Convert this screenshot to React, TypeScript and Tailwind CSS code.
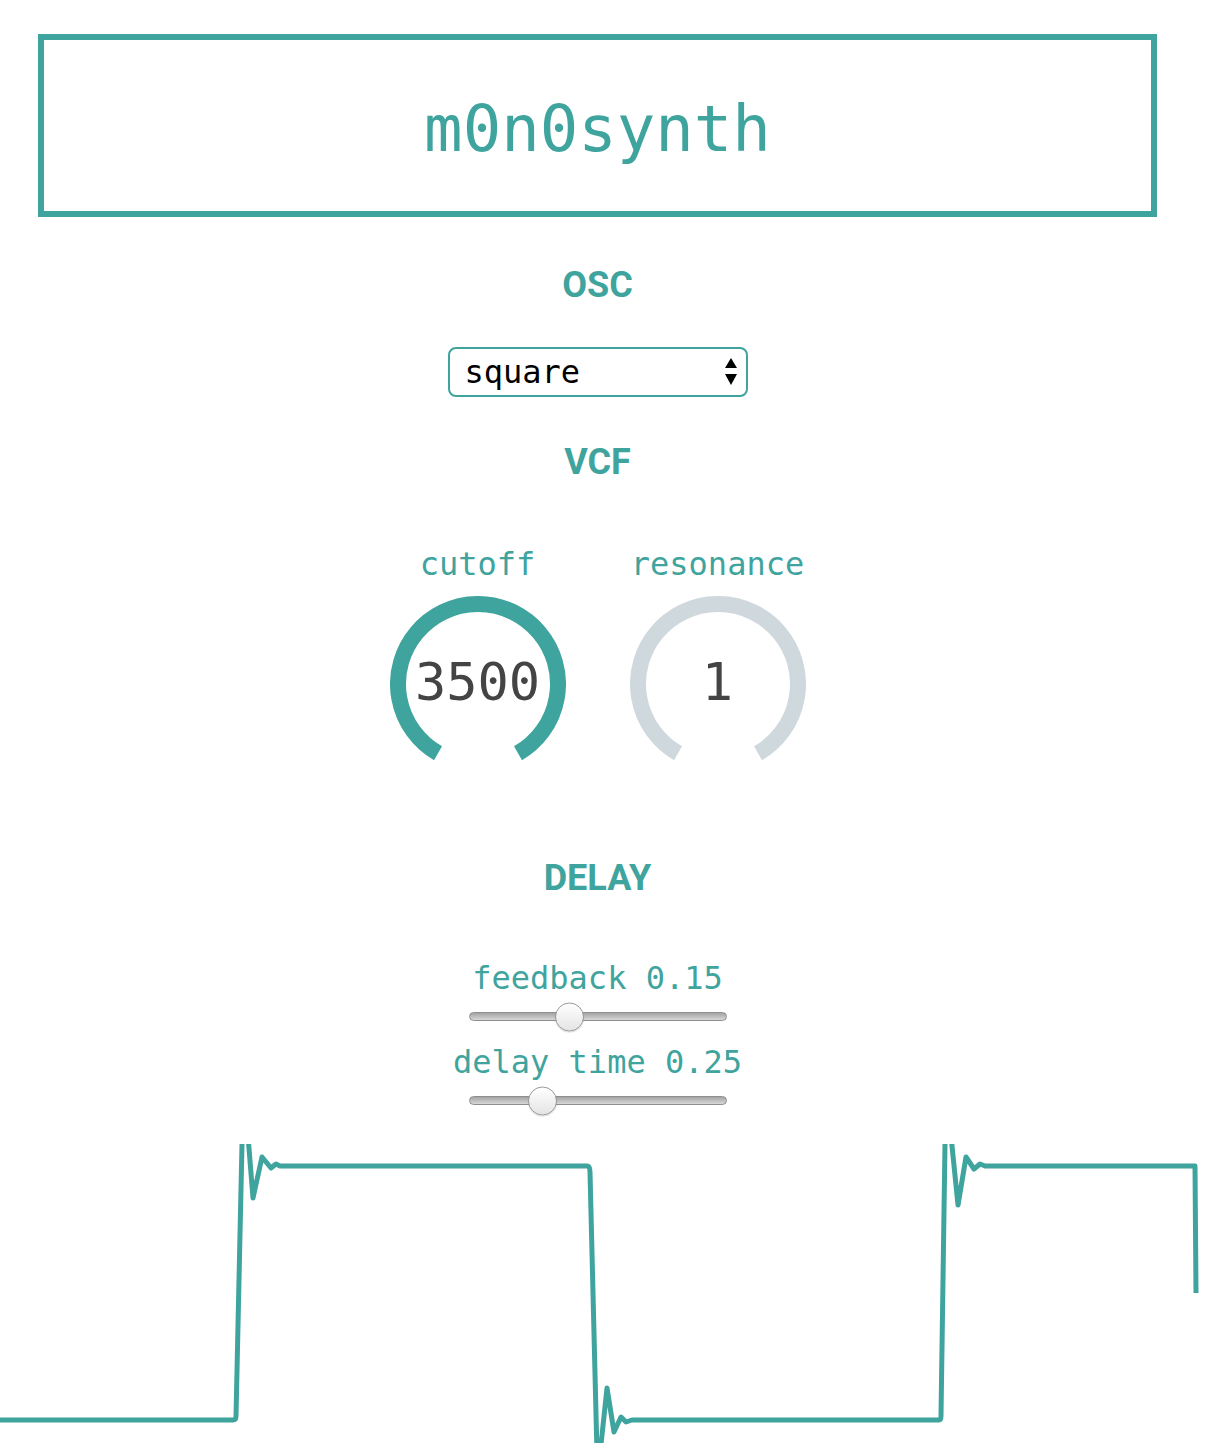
const teal = '#3fa49e';

function Knob({ label, value, color }: { label: string; value: string; color: string }) {
  return (
    <div className="w-[240px] flex flex-col items-center">
      <div className="h-[40px] text-[32px] leading-[40px] text-[#3fa49e]">{label}</div>
      <div className="relative w-[176px] h-[176px] mt-[12px]">
        <svg width="176" height="176" viewBox="0 0 176 176">
          <path d="M48 157.28 A80 80 0 1 1 128 157.28" fill="none" stroke={color} strokeWidth="16" />
        </svg>
        <div className="absolute inset-0 flex items-center justify-center pb-[4px]">
          <span className="text-[52px] leading-none text-[#444]">{value}</span>
        </div>
      </div>
    </div>
  );
}

function Slider({ pos }: { pos: number }) {
  return (
    <div className="h-[37px] flex items-center justify-center">
      <div className="relative w-[258px] h-[9px] rounded-full border border-[#8e8e8e] bg-gradient-to-b from-[#a4a4a4] to-[#d8d8d8]">
        <div
          className="absolute top-1/2 w-[29px] h-[29px] -translate-y-1/2 rounded-full border border-[#9a9a9a] bg-gradient-to-b from-[#ffffff] to-[#e4e4e4] shadow-[0_1px_1px_rgba(0,0,0,0.15)]"
          style={{ left: pos }}
        />
      </div>
    </div>
  );
}

function Heading({ children, className }: { children: string; className: string }) {
  return (
    <h2 className={`h-[40px] text-center font-['Roboto',sans-serif] font-bold text-[36px] leading-[40px] text-[#3fa49e] ${className}`}>
      {children}
    </h2>
  );
}

export default function App() {
  return (
    <div className="w-[1195px] bg-white font-['DejaVu_Sans_Mono',monospace] pt-[34px] flex flex-col">
      <div className="mx-[38px] h-[183px] border-[6px] border-[#3fa49e] flex items-center justify-center pt-[7px]">
        <h1 className="text-[64px] leading-none text-[#3fa49e]">m0n0synth</h1>
      </div>

      <Heading className="mt-[48px]">OSC</Heading>

      <div className="mt-[42px] flex justify-center">
        <div className="w-[300px] h-[50px] rounded-[8px] border-2 border-[#3fa49e] bg-white flex items-center justify-between pl-[15px] pr-[9px]">
          <span className="text-[32px] leading-none text-black">square</span>
          <svg width="12" height="28" viewBox="0 0 12 28">
            <path d="M6 0 L12 10 L0 10 Z" fill="#000" />
            <path d="M0 16 L12 16 L6 27 Z" fill="#000" />
          </svg>
        </div>
      </div>

      <Heading className="mt-[45px]">VCF</Heading>

      <div className="mt-[62px] flex justify-center">
        <Knob label="cutoff" value="3500" color={teal} />
        <Knob label="resonance" value="1" color="#cfd8dc" />
      </div>

      <Heading className="mt-[86px]">DELAY</Heading>

      <div className="mt-[60px] h-[40px] text-center text-[32px] leading-[40px] text-[#3fa49e]">feedback 0.15</div>
      <Slider pos={85} />
      <div className="mt-[7px] h-[40px] text-center text-[32px] leading-[40px] text-[#3fa49e]">delay time 0.25</div>
      <Slider pos={58} />

      <svg className="mt-[25px] block" width="1210" height="299" viewBox="0 0 1210 299">
        <path
          d="M0 276 L233 276 Q236 276 236 272 L242 0 L243 -8 L248 -8 L253 54 L262 13 L271 24 L276 20 L280 22 L587 22 Q590 22 590 28 L597 310 L600 310 L607 244 L614 288 L621 273 L626 278 L632 276 L939 276 Q941 276 941 272 L945 0 L946 -8 L951 -8 L958 61 L966 13 L974 25 L980 20 L985 22 L1195 22 L1196 149"
          fill="none"
          stroke={teal}
          strokeWidth="5"
          strokeLinejoin="round"
        />
      </svg>
    </div>
  );
}
